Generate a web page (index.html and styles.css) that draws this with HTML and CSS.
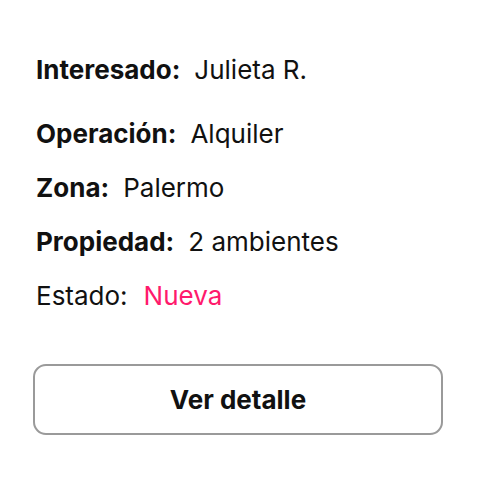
FILE: index.html
```html
<!DOCTYPE html>
<html lang="es">
<head>
	<meta charset="UTF-8">
	<title>Consulta</title>
	<link rel="stylesheet" href="styles.css">
</head>
<body>
<section class="lead-card">
	<dl class="fields">
		<div class="field first"><dt>Interesado:</dt><dd>Julieta R.</dd></div>
		<div class="field"><dt>Operación:</dt><dd>Alquiler</dd></div>
		<div class="field"><dt>Zona:</dt><dd>Palermo</dd></div>
		<div class="field"><dt>Propiedad:</dt><dd>2 ambientes</dd></div>
		<div class="field plain"><dt>Estado:</dt><dd class="status-new">Nueva</dd></div>
	</dl>
	<button class="detail-button" type="button">Ver detalle</button>
</section>
</body>
</html>
```

FILE: styles.css
```css
:root {
	--color-text: #111;
	--color-status-new: #ff1a6c;
	--color-border: #9a9a9a;
}

html {
	font-family: Inter, "Noto Sans", sans-serif;
	color: var(--color-text);
	background: #fff;
}

body {
	margin: 0;
}

.lead-card {
	padding: 54px 36px 0 36px;
}

.fields {
	margin: 0;
}

.field {
	display: flex;
	align-items: baseline;
	font-size: 26px;
	line-height: 32px;
	margin-bottom: 22px;
}

.field.first {
	margin-bottom: 32px;
}

.field:last-child {
	margin-bottom: 0;
}

.field dt {
	font-weight: 700;
	margin-right: 14px;
}

.field.plain dt {
	font-weight: 400;
	margin-right: 16px;
}

.field dd {
	margin: 0;
}

.status-new {
	color: var(--color-status-new);
}

.detail-button {
	display: block;
	width: 410px;
	height: 71px;
	margin-top: 52px;
	margin-left: -3px;
	font-family: inherit;
	font-size: 26px;
	font-weight: 700;
	color: var(--color-text);
	background: #fff;
	border: 2px solid var(--color-border);
	border-radius: 13px;
}
```
